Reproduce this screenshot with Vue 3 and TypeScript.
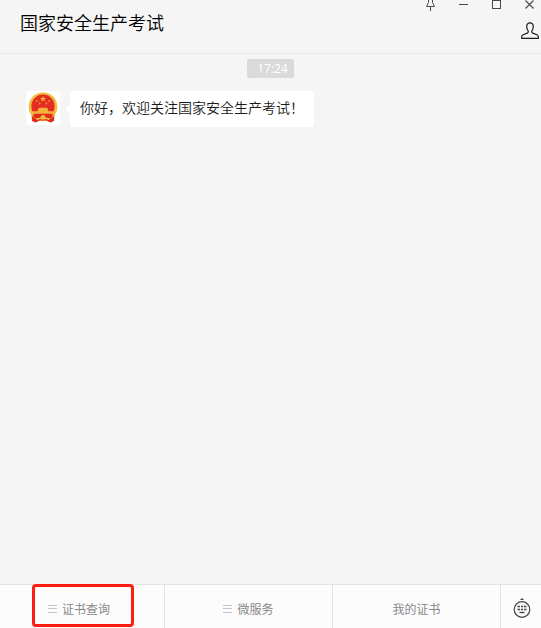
<script setup lang="ts">
interface MenuEntry {
  label: string
  hasSubmenu: boolean
  highlighted: boolean
}

const title = '国家安全生产考试'
const time = '17:24'
const message = '你好，欢迎关注国家安全生产考试！'

const menu: MenuEntry[] = [
  { label: '证书查询', hasSubmenu: true, highlighted: true },
  { label: '微服务', hasSubmenu: true, highlighted: false },
  { label: '我的证书', hasSubmenu: false, highlighted: false },
]
</script>

<template>
  <div class="window">
    <header class="header">
      <h1 class="title">{{ title }}</h1>
      <div class="tools">
        <div class="controls">
          <button class="control" type="button" aria-label="置顶">
            <svg width="11" height="12" viewBox="0 0 11 12" fill="none" stroke="#4a4a4a">
              <path d="M3.5 -1V2.5L1.5 6.5H9.5L7.5 2.5V-1M5.5 6.5V11" />
            </svg>
          </button>
          <button class="control" type="button" aria-label="最小化">
            <svg width="11" height="12" viewBox="0 0 11 12" stroke="#4a4a4a">
              <path d="M1 4.5H10" />
            </svg>
          </button>
          <button class="control" type="button" aria-label="最大化">
            <svg width="11" height="12" viewBox="0 0 11 12" fill="none" stroke="#4a4a4a">
              <rect x="1.5" y="0.5" width="8" height="8" />
            </svg>
          </button>
          <button class="control" type="button" aria-label="关闭">
            <svg width="11" height="12" viewBox="0 0 11 12" stroke="#4a4a4a" stroke-width="1.1">
              <path d="M1.5 0.5L9.5 8.5M9.5 0.5L1.5 8.5" />
            </svg>
          </button>
        </div>
        <button class="profile" type="button" aria-label="公众号资料">
          <svg width="18" height="18" viewBox="0 0 18 18" fill="none" stroke="#1c1c1c" stroke-width="1.2" stroke-linejoin="round">
            <path d="M9 0.8C6.9 0.8 5.7 2.3 5.7 4.4C5.7 6.4 6.2 7.6 7 8.7C7.6 9.6 7.3 10.6 6.2 11.1L2.1 12.8C1.1 13.2 0.7 13.9 0.7 14.8V16.4H17.3V14.8C17.3 13.9 16.9 13.2 15.9 12.8L11.8 11.1C10.7 10.6 10.4 9.6 11 8.7C11.8 7.6 12.3 6.4 12.3 4.4C12.3 2.3 11.1 0.8 9 0.8Z" />
          </svg>
        </button>
      </div>
    </header>

    <main class="chat">
      <time class="time">{{ time }}</time>
      <div class="message">
        <svg class="avatar" viewBox="0 0 34 34" role="img" aria-label="国徽">
          <path d="M5.5 22L6 30L9.5 31.5L13 30H21L24.5 31.5L28 30L28.5 22Z" fill="#df2a1e" />
          <circle cx="17" cy="15.7" r="14.3" fill="#f0bc42" />
          <circle cx="17" cy="15.2" r="11.6" fill="#e52c22" />
          <path d="M17 4.8L17.8 7H20.1L18.3 8.4L18.9 10.6L17 9.3L15.1 10.6L15.7 8.4L13.9 7H16.2Z" fill="#f3b53a" />
          <g fill="#f09a34">
            <circle cx="10.9" cy="9.9" r="0.9" />
            <circle cx="13.6" cy="12.5" r="0.9" />
            <circle cx="20.4" cy="12.5" r="0.9" />
            <circle cx="23.1" cy="9.9" r="0.9" />
          </g>
          <path d="M13 16.8H21L22.2 18.6V20.3H27V22.8H7V20.3H11.8V18.6Z" fill="#f2b23a" />
          <path d="M6.5 23.5H27.5L25 27.5L20 26.6L17 28.5L14 26.6L9 27.5Z" fill="#df2a1e" />
          <circle cx="17" cy="26.6" r="2.6" fill="#f0bc42" />
          <path d="M11 29.8C13 28.2 15 28.6 17 29.2C19 28.6 21 28.2 23 29.8" fill="none" stroke="#df2a1e" />
        </svg>
        <p class="bubble">{{ message }}</p>
      </div>
    </main>

    <nav class="menu">
      <button v-for="entry in menu" :key="entry.label" class="entry" type="button">
        <svg v-if="entry.hasSubmenu" width="9" height="8" viewBox="0 0 9 8" fill="#c6c6c6" aria-hidden="true">
          <path d="M0 0H9V1H0ZM0 3H9V4H0ZM0 7H9V8H0Z" />
        </svg>
        <span>{{ entry.label }}</span>
        <span v-if="entry.highlighted" class="highlight"></span>
      </button>
      <button class="entry keyboard" type="button" aria-label="切换键盘">
        <svg width="18" height="20" viewBox="0 0 18 20" fill="none" stroke="#454545">
          <circle cx="9" cy="11.5" r="7.8" stroke-width="1.2" />
          <path d="M7 2L9 0L11 2Z" fill="#454545" stroke="none" />
          <path d="M4.5 8.5H7M8 8.5H10M11 8.5H13.5M4.5 11.5H7M8 11.5H10M11 11.5H13.5" stroke-width="1.4" />
          <path d="M6.5 14.5H11.5" stroke-width="1.4" />
        </svg>
      </button>
    </nav>
  </div>
</template>

<style>
body {
  margin: 0;
}
</style>

<style scoped>
.window {
  display: flex;
  flex-direction: column;
  min-height: 100vh;
  overflow: hidden;
  background: #f5f5f5;
  color: #1a1a1a;
  font-family: "Open Sans", "Noto Sans CJK SC", sans-serif;
}

button {
  margin: 0;
  padding: 0;
  border: 0;
  background: none;
  color: inherit;
  font: inherit;
  cursor: pointer;
}

svg {
  display: block;
  flex: none;
}

.header {
  display: flex;
  justify-content: space-between;
  height: 53px;
  border-bottom: 1px solid #e7e7e7;
}

.title {
  margin: 0;
  padding: 9px 20px;
  color: #000;
  font-family: "Noto Sans CJK SC", sans-serif;
  font-size: 18px;
  font-weight: 350;
  line-height: 26px;
}

.tools {
  display: flex;
  flex-direction: column;
  align-items: flex-end;
  gap: 10px;
}

.controls {
  display: flex;
  gap: 9px;
}

.control {
  display: flex;
  justify-content: center;
  width: 24px;
}

.profile {
  margin-right: 2px;
}

.chat {
  display: flex;
  flex: 1;
  flex-direction: column;
  gap: 13px;
  padding: 5px 26px;
}

.time {
  align-self: center;
  padding: 0 6px 0 10px;
  border-radius: 2px;
  background: #dadada;
  color: #fff;
  font-size: 12px;
  line-height: 19px;
}

.message {
  display: flex;
  align-items: flex-start;
  gap: 10px;
}

.avatar {
  width: 34px;
  height: 34px;
  border-radius: 3px;
  background: #fff;
}

.bubble {
  position: relative;
  margin: 0;
  padding: 4px 10px 8px;
  border-radius: 4px;
  background: #fff;
  font-family: "Noto Sans CJK SC", sans-serif;
  font-size: 14px;
  font-weight: 350;
  line-height: 24px;
}

.bubble::before {
  position: absolute;
  top: 13px;
  left: -5px;
  border: 5px solid transparent;
  border-right-color: #fff;
  border-left: 0;
  content: "";
}

.menu {
  display: grid;
  grid-template-columns: 1fr 1fr 1fr 41px;
  height: 43px;
  margin-left: -4px;
  border-top: 1px solid #e3e3e3;
  background: #fcfcfc;
}

.entry {
  position: relative;
  display: flex;
  align-items: center;
  justify-content: center;
  gap: 5px;
  padding: 4px 2px 0 0;
  color: #888;
  font-family: "Noto Sans CJK SC", sans-serif;
  font-size: 12px;
  line-height: 18px;
}

.entry + .entry {
  padding-right: 0;
  border-left: 1px solid #e3e3e3;
}

.menu .keyboard {
  padding: 2px 0 0 2px;
}

.highlight {
  position: absolute;
  top: -1px;
  bottom: 1px;
  left: 36px;
  box-sizing: border-box;
  width: 102px;
  border: 3px solid #fe1d10;
  border-radius: 4px;
}
</style>
